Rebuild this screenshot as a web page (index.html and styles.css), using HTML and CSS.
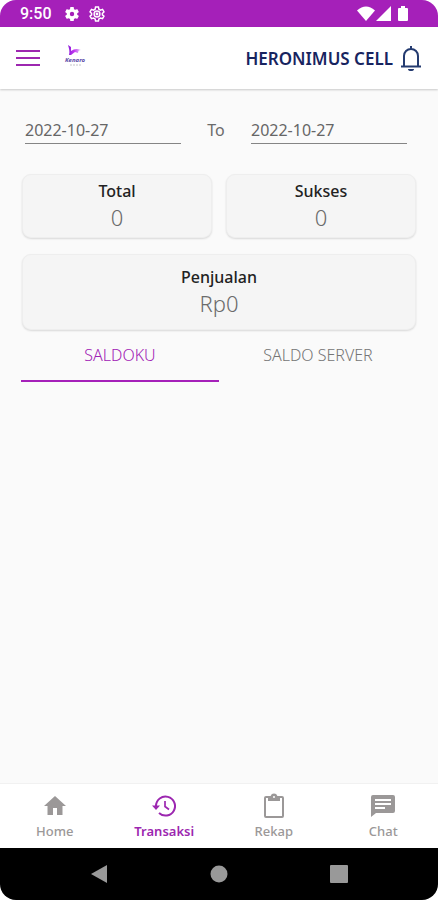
FILE: index.html
```html
<!DOCTYPE html>
<html lang="id">
<head>
<meta charset="utf-8">
<meta name="viewport" content="width=device-width, initial-scale=1">
<title>Transaksi</title>
<link rel="stylesheet" href="styles.css">
</head>
<body>
<div class="phone">
  <div class="status">
    <span class="clock">9:50</span>
    <svg class="gear" viewBox="1 1 22 22"><path d="M19.14 12.94c.04-.3.06-.61.06-.94s-.02-.64-.07-.94l2.03-1.58a.49.49 0 0 0 .12-.61l-1.92-3.32a.49.49 0 0 0-.59-.22l-2.39.96a7 7 0 0 0-1.62-.94l-.36-2.54a.48.48 0 0 0-.48-.41h-3.84a.48.48 0 0 0-.47.41l-.36 2.54c-.59.24-1.13.57-1.62.94l-2.39-.96a.48.48 0 0 0-.59.22L2.74 8.87a.48.48 0 0 0 .12.61l2.03 1.58c-.05.3-.09.63-.09.94s.02.64.07.94l-2.03 1.58a.49.49 0 0 0-.12.61l1.92 3.32c.12.22.37.29.59.22l2.39-.96c.5.38 1.03.7 1.62.94l.36 2.54c.05.24.24.41.48.41h3.84c.24 0 .44-.17.47-.41l.36-2.54a7 7 0 0 0 1.62-.94l2.39.96c.22.08.47 0 .59-.22l1.92-3.32a.48.48 0 0 0-.12-.61zM12 15a3 3 0 1 1 0-6 3 3 0 0 1 0 6z"/></svg>
    <svg class="gear gear-line" viewBox="1 1 22 22"><path d="M10 2.500h4l.6 2.900 2.200 1.300 2.800-1 2 3.500-2.200 1.900v2l2.200 1.900-2 3.500-2.800-1-2.200 1.300-.6 2.900h-4l-.6-2.900-2.200-1.300-2.800 1-2-3.500 2.200-1.900v-2L2.400 9.200l2-3.500 2.800 1 2.200-1.300z"/><circle cx="12" cy="12" r="4"/><circle cx="12" cy="12" r="1"/></svg>
    <span class="signals">
      <svg width="18" height="16" viewBox="0 0 18 16"><path d="M0 4.500Q9-3.500 18 4.500L9 15z"/></svg>
      <svg width="15" height="16" viewBox="0 0 15 16"><path d="M15 0v15H0z"/></svg>
      <svg class="battery" width="10" height="16" viewBox="0 0 10 16"><path d="M3 0h4v2h2a1 1 0 0 1 1 1v11a1 1 0 0 1-1 1H1a1 1 0 0 1-1-1V3a1 1 0 0 1 1-1h2z"/></svg>
    </span>
  </div>

  <header class="appbar">
    <button class="icon-btn" type="button" aria-label="Menu">
      <svg width="24" height="18" viewBox="0 0 24 18"><path d="M0 2h24M0 9h24M0 16h24" stroke="#9d27b0" stroke-width="2"/></svg>
    </button>
    <svg class="logo" width="24" height="24" viewBox="0 0 24 24" role="img" aria-label="Logo">
      <defs><linearGradient id="wing"><stop offset="0" stop-color="#8a18d8"/><stop offset=".5" stop-color="#c43cf0"/><stop offset="1" stop-color="#e4d3fa"/></linearGradient></defs>
      <path fill="url(#wing)" d="M4 1l3 2v4c3-2 6-3 10-1-2 0-3 1-3 3l-3-1-4 3H5c1-3 0-7-1-10z"/>
      <text class="logo-name" x="11" y="18">Kenaro</text>
      <path d="M6 21h11" stroke="#c4c4c8" stroke-dasharray="2 1"/>
    </svg>
    <span class="store">HERONIMUS CELL</span>
    <button class="icon-btn" type="button" aria-label="Notifikasi">
      <svg width="22" height="26" viewBox="0 0 22 26" fill="none" stroke="#243b70" stroke-width="2"><path d="M4 21V11c0-4 3-7 7-7s7 3 7 7v10M1 21.500h20M11 4V1"/><path d="M8 24h6a3 2 0 0 1-6 0z" fill="#243b70" stroke="none"/></svg>
    </button>
  </header>

  <main>
    <div class="dates">
      <input type="text" aria-label="Tanggal awal" value="2022-10-27">
      <span>To</span>
      <input type="text" aria-label="Tanggal akhir" value="2022-10-27">
    </div>
    <div class="cards">
      <section class="card"><h2>Total</h2><p>0</p></section>
      <section class="card"><h2>Sukses</h2><p>0</p></section>
      <section class="card wide"><h2>Penjualan</h2><p>Rp0</p></section>
    </div>
    <div class="tabs" role="tablist">
      <button class="tab active" type="button" role="tab" aria-selected="true">SALDOKU</button>
      <button class="tab" type="button" role="tab" aria-selected="false">SALDO SERVER</button>
    </div>
  </main>

  <nav class="bottom">
    <a href="#home"><svg viewBox="0 0 24 24"><path d="M10 21v-7h4v7h5.500v-9H23L12 2 1 12h3.500v9z"/></svg>Home</a>
    <a class="active" href="#transaksi"><svg viewBox="0 0 24 24"><path d="M4 12a9.500 9.500 0 1 1 3 7" fill="none" stroke="currentColor" stroke-width="2"/><path d="M0 11.500h8l-4 4.500z"/><path d="M13 7v5.500l4 3" fill="none" stroke="currentColor" stroke-width="1.700"/></svg>Transaksi</a>
    <a href="#rekap"><svg class="clip" viewBox="0 0 22 26"><path d="M19 3h-4.600a3.600 3.600 0 0 0-6.800 0H3a2 2 0 0 0-2 2v18a2 2 0 0 0 2 2h16a2 2 0 0 0 2-2V5a2 2 0 0 0-2-2zm-8 0a1 1 0 1 1 0 2 1 1 0 0 1 0-2zm8 20H3V5h2v3h12V5h2z"/></svg>Rekap</a>
    <a href="#chat"><svg viewBox="0 0 24 24"><path d="M22 1H2a2 2 0 0 0-2 2v20l5-4h17a2 2 0 0 0 2-2V3a2 2 0 0 0-2-2zM4 5h16v2H4zm10 10H4v-2h10zm6-4H4V9h16z"/></svg>Chat</a>
  </nav>

  <div class="system">
    <button type="button" aria-label="Kembali"><svg width="18" height="20" viewBox="0 0 18 20"><path d="M17 1v18L1 10z"/></svg></button>
    <button type="button" aria-label="Beranda"><svg width="18" height="18" viewBox="0 0 18 18"><circle cx="9" cy="9" r="8.500"/></svg></button>
    <button type="button" aria-label="Aplikasi terbaru"><svg width="18" height="18" viewBox="0 0 18 18"><rect width="18" height="18" rx="1"/></svg></button>
  </div>
</div>
</body>
</html>
```
FILE: styles.css
```css
* {
  box-sizing: border-box;
}

body {
  margin: 0;
  background: #fff;
  font-family: "Noto Sans", "Open Sans", sans-serif;
  color: #6b6b6b;
}

button {
  padding: 0;
  border: 0;
  background: none;
  font: inherit;
}

svg {
  display: block;
}

h2,
p {
  margin: 0;
}

.phone {
  display: flex;
  flex-direction: column;
  min-height: 100vh;
  overflow: hidden;
  border-radius: 16px;
  background: #fafafa;
}

.status {
  display: flex;
  align-items: center;
  gap: 9px;
  height: 27px;
  padding: 0 30px 0 20px;
  background: #a520b9;
  color: #fff;
  fill: #fff;
}

.clock {
  margin-right: 3px;
  font: 500 16px/27px Roboto, sans-serif;
}

.gear {
  width: 16px;
  height: 16px;
}

.gear-line {
  fill: none;
  stroke: #fff;
  stroke-width: 2;
}

.signals {
  display: flex;
  gap: 1px;
  margin-left: auto;
}

.battery {
  margin-left: 6px;
}

.appbar {
  display: flex;
  align-items: center;
  height: 62px;
  padding: 0 16px;
  background: #fff;
  box-shadow: 0 1px 2px #0003;
}

.logo {
  margin: 0 auto 4px 24px;
}

.logo-name {
  fill: #5a4aa8;
  font-size: 6px;
  font-style: italic;
  font-weight: 700;
  text-anchor: middle;
}

.store {
  margin-right: 7px;
  color: #17245f;
  font-size: 17px;
  font-weight: 600;
}

main {
  flex: 1;
  padding: 27px 21px 0;
}

.dates {
  display: grid;
  grid-template-columns: 1fr 70px 1fr;
  padding: 0 10px 0 4px;
  font-size: 16px;
  line-height: 28px;
  text-align: center;
}

.dates input {
  width: 100%;
  min-width: 0;
  height: 28px;
  padding: 0;
  border: 0;
  border-bottom: 1px solid #858585;
  border-radius: 0;
  background: none;
  color: #666;
  font: inherit;
}

.cards {
  display: grid;
  grid-template-columns: 1fr 1fr;
  gap: 16px 14px;
  margin-top: 30px;
  padding: 0 1px;
}

.card {
  height: 64px;
  padding-top: 5px;
  border: 1px solid #eee;
  border-radius: 9px;
  background: #f5f5f5;
  box-shadow: 0 1px 2px #0002;
  text-align: center;
}

.wide {
  grid-column: 1 / -1;
  height: 76px;
  padding-top: 11px;
}

.card h2 {
  color: #222;
  font-size: 16px;
  font-weight: 500;
  line-height: 22px;
}

.card p {
  font-size: 22px;
  font-weight: 300;
  line-height: 30px;
}

.tabs {
  display: grid;
  grid-template-columns: 1fr 1fr;
}

.tab {
  height: 52px;
  border-bottom: 2px solid transparent;
  color: #757575;
  font-size: 16px;
  font-weight: 300;
}

.tab.active {
  border-color: #a520b9;
  color: #a020b5;
}

.bottom {
  display: grid;
  grid-template-columns: repeat(4, 1fr);
  height: 65px;
  padding-top: 10px;
  border-top: 1px solid #f1f1f1;
  background: #fff;
}

.bottom a {
  display: flex;
  flex-direction: column;
  align-items: center;
  gap: 4px;
  color: #9b9898;
  fill: currentColor;
  font-size: 13px;
  font-weight: 500;
  line-height: 18px;
  text-decoration: none;
}

.bottom svg {
  width: 24px;
  height: 24px;
}

.bottom .clip {
  height: 26px;
  margin: -1px 0;
}

.bottom .active {
  color: #9c27b0;
  font-weight: 600;
}

.system {
  display: flex;
  align-items: center;
  justify-content: space-between;
  height: 52px;
  padding: 0 90px;
  background: #000;
  fill: #999;
}
```
